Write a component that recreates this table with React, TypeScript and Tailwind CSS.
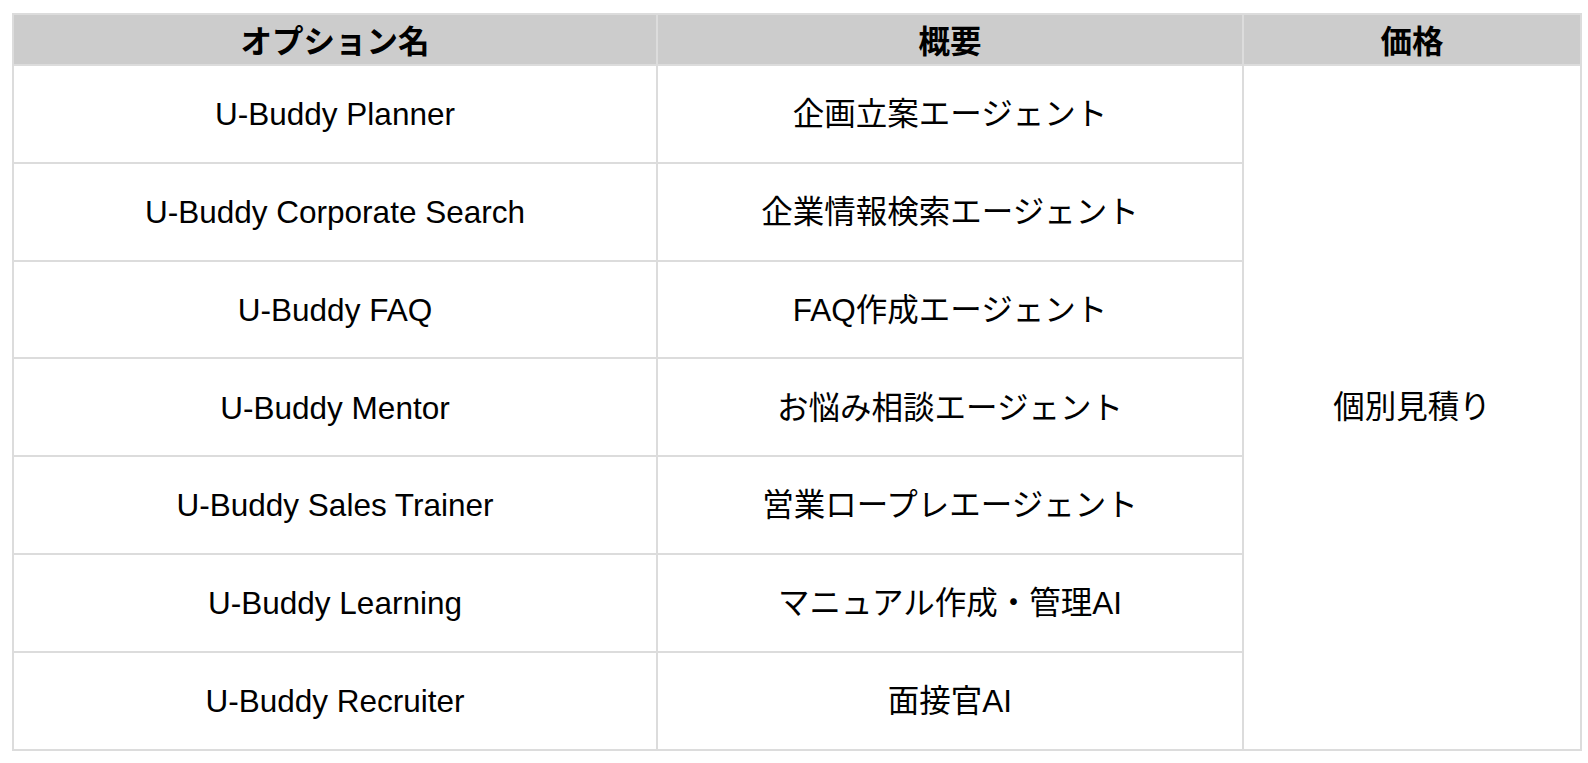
const rows = [
  { name: "U-Buddy Planner", summary: "企画立案エージェント" },
  { name: "U-Buddy Corporate Search", summary: "企業情報検索エージェント" },
  { name: "U-Buddy FAQ", summary: "FAQ作成エージェント" },
  { name: "U-Buddy Mentor", summary: "お悩み相談エージェント" },
  { name: "U-Buddy Sales Trainer", summary: "営業ロープレエージェント" },
  { name: "U-Buddy Learning", summary: "マニュアル作成・管理AI" },
  { name: "U-Buddy Recruiter", summary: "面接官AI" },
];

export default function App() {
  return (
    <div className="min-h-screen bg-white pl-[12px] pt-[13px]" style={{ fontFamily: '"Liberation Sans", "Noto Sans CJK JP", sans-serif' }}>
      <table className="w-[1570px] table-fixed border-collapse border-2 border-[#dcdcdc] text-[31.5px] text-black">
        <colgroup>
          <col className="w-[644px]" />
          <col className="w-[586px]" />
          <col />
        </colgroup>
        <thead>
          <tr className="h-[51px] bg-[#cccccc]">
            {["オプション名", "概要", "価格"].map((h) => (
              <th key={h} className="border-2 border-[#dcdcdc] p-0 text-center font-bold leading-none" style={{ fontFamily: '"Noto Sans CJK JP", sans-serif' }}>
                {h}
              </th>
            ))}
          </tr>
        </thead>
        <tbody>
          {rows.map((r, i) => (
            <tr key={r.name} className="h-[97.8px]">
              <td className="border-2 border-[#dcdcdc] p-0 pt-[2px] text-center leading-none">{r.name}</td>
              <td className="border-2 border-[#dcdcdc] p-0 pt-[2px] text-center leading-none">{r.summary}</td>
              {i === 0 && (
                <td rowSpan={rows.length} className="border-2 border-[#dcdcdc] p-0 text-center leading-none">
                  個別見積り
                </td>
              )}
            </tr>
          ))}
        </tbody>
      </table>
    </div>
  );
}
